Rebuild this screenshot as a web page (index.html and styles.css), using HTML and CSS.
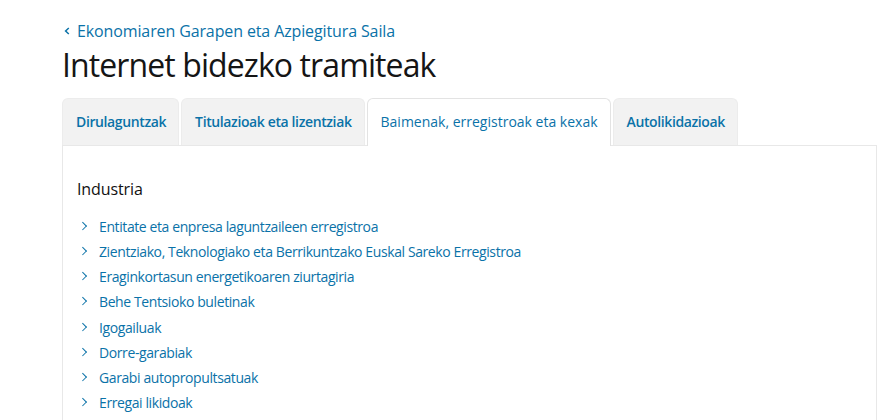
FILE: index.html
```html
<!DOCTYPE html>
<html lang="eu">
<head>
<meta charset="utf-8">
<title>Internet bidezko tramiteak</title>
<link rel="stylesheet" href="styles.css">
</head>
<body>
<div class="page">
  <a class="crumb" href="#">
    <svg class="crumb-icon" width="6" height="8" viewBox="0 0 6 8"><path d="M4.8 1 L1.6 4 L4.8 7" fill="none" stroke="currentColor" stroke-width="1.5"/></svg>
    <span>Ekonomiaren Garapen eta Azpiegitura Saila</span>
  </a>
  <h1 class="title">Internet bidezko tramiteak</h1>
  <div class="tabs">
    <a class="tab" href="#">Dirulaguntzak</a>
    <a class="tab" href="#">Titulazioak eta lizentziak</a>
    <a class="tab active" href="#">Baimenak, erregistroak eta kexak</a>
    <a class="tab" href="#">Autolikidazioak</a>
  </div>
  <div class="panel">
    <h2 class="section">Industria</h2>
    <ul class="links">
      <li><a href="#">Entitate eta enpresa laguntzaileen erregistroa</a></li>
      <li><a href="#">Zientziako, Teknologiako eta Berrikuntzako Euskal Sareko Erregistroa</a></li>
      <li><a href="#">Eraginkortasun energetikoaren ziurtagiria</a></li>
      <li><a href="#">Behe Tentsioko buletinak</a></li>
      <li><a href="#">Igogailuak</a></li>
      <li><a href="#">Dorre-garabiak</a></li>
      <li><a href="#">Garabi autopropultsatuak</a></li>
      <li><a href="#">Erregai likidoak</a></li>
    </ul>
  </div>
</div>
</body>
</html>
```
FILE: styles.css
```css
html, body {
  margin: 0;
  padding: 0;
  background: #fff;
  font-family: "Open Sans", "Liberation Sans", sans-serif;
  color: #1a1a1a;
}
.page {
  padding: 21px 6px 0 62px;
}
.crumb {
  display: flex;
  align-items: center;
  gap: 7px;
  color: #0a72a8;
  text-decoration: none;
  font-size: 16px;
  line-height: 20px;
  padding-left: 2px;
  letter-spacing: -0.12px;
}
.crumb-icon {
  display: block;
}
.title {
  margin: 2px 0 0 0;
  font-size: 32px;
  font-weight: 400;
  line-height: 44px;
  letter-spacing: -0.9px;
  color: #151515;
}
.tabs {
  display: flex;
  gap: 2px;
  margin-top: 11px;
  position: relative;
  z-index: 1;
}
.tab {
  display: block;
  height: 46px;
  line-height: 46px;
  padding: 0 12px 0 13px;
  background: #f2f2f2;
  border: 1px solid #ececec;
  border-bottom: none;
  border-radius: 6px 6px 0 0;
  color: #0a72a8;
  font-size: 14px;
  font-weight: 600;
  text-decoration: none;
  letter-spacing: -0.38px;
}
.tab.active {
  background: #fff;
  border-color: #e3e3e3;
  font-weight: 400;
  letter-spacing: 0;
  height: 47px;
  margin-bottom: -1px;
  padding: 0 12px 0 13px;
}
.panel {
  border: 1px solid #e8e8e8;
  border-bottom: none;
  height: 300px;
  padding: 32px 14px 0 14px;
}
.section {
  margin: 0;
  font-size: 16px;
  font-weight: 400;
  line-height: 22px;
  color: #111;
  letter-spacing: -0.1px;
}
.links {
  list-style: none;
  margin: 14px 0 0 0;
  padding: 0;
}
.links li {
  height: 25.13px;
  line-height: 25px;
  padding-left: 22px;
  position: relative;
  font-size: 14px;
}
.links li::before {
  content: "";
  position: absolute;
  left: 3px;
  top: 9px;
  width: 4.5px;
  height: 4.5px;
  border-top: 1.7px solid #0a72a8;
  border-right: 1.7px solid #0a72a8;
  transform: rotate(45deg);
}
.links a {
  color: #0a72a8;
  text-decoration: none;
  letter-spacing: -0.4px;
}
```
